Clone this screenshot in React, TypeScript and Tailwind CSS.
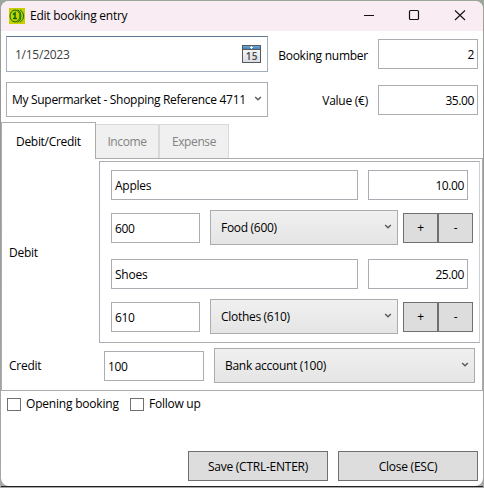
import type { ReactNode } from 'react';

function Chevron() {
  return (
    <svg className="mb-px shrink-0" width="8" height="6" viewBox="0 0 8 6" fill="none">
      <path d="M1.2 1L4 3.8L6.8 1" stroke="#5c5c5c" strokeWidth="1.5" />
    </svg>
  );
}

function Field({ className = '', children }: { className?: string; children: ReactNode }) {
  return (
    <div className={`flex h-[30px] shrink-0 items-center border border-[#abadb3] bg-white px-[3px] pt-[2px] ${className}`}>
      {children}
    </div>
  );
}

function NumberField({ className = '', children }: { className?: string; children: ReactNode }) {
  return <Field className={`justify-end tracking-[-0.4px] ${className}`}>{children}</Field>;
}

function Combo({ className = '', children }: { className?: string; children: ReactNode }) {
  return (
    <div
      className={`flex h-[35px] shrink-0 items-center justify-between border border-[#acacac] bg-linear-to-b from-[#f0f0f0] to-[#e5e5e5] pr-[5px] pl-[10px] tracking-[-0.3px] ${className}`}
    >
      <span className="pt-px">{children}</span>
      <Chevron />
    </div>
  );
}

function Button({ className = '', children }: { className?: string; children: ReactNode }) {
  return (
    <div className={`flex h-[30px] shrink-0 items-center justify-center border border-[#707070] bg-[#dddddd] pt-px ${className}`}>
      {children}
    </div>
  );
}

function Posting({ text, amount, code, account }: { text: string; amount: string; code: string; account: string }) {
  return (
    <div className="h-[89px] pl-[11px]">
      <div className="flex gap-[10px]">
        <Field className="w-[247px]">{text}</Field>
        <NumberField className="w-[100px]">{amount}</NumberField>
      </div>
      <div className="mt-[10px] flex items-center">
        <Field className="w-[89px] tracking-[-0.4px]">{code}</Field>
        <Combo className="ml-[10px] w-[188px]">{account}</Combo>
        <Button className="ml-[5px] w-[35px]">+</Button>
        <Button className="w-[35px]">-</Button>
      </div>
    </div>
  );
}

function AppIcon() {
  return (
    <svg width="16" height="16" viewBox="0 0 16 16" fill="none" stroke="#087008">
      <rect width="16" height="16" fill="#c8cf00" stroke="none" />
      <ellipse cx="6" cy="8" rx="5" ry="5.9" strokeWidth="1" />
      <path d="M4 6.5L6 5V10.5M4 10.5H8" strokeWidth="1.6" />
      <path d="M8.5 1.7Q12 3 12 8T8.5 14.3M11 1.7Q14.7 4 14.7 8T11 14.3" />
    </svg>
  );
}

function CalendarIcon() {
  return (
    <svg width="19" height="18" viewBox="0 0 19 18">
      <defs>
        <linearGradient id="page" x2="0" y2="1">
          <stop stopColor="#fff" />
          <stop offset="1" stopColor="#d8dbe0" />
        </linearGradient>
        <linearGradient id="head" x2="0" y2="1">
          <stop stopColor="#6aa6d8" />
          <stop offset="1" stopColor="#3b7fbd" />
        </linearGradient>
      </defs>
      <rect x=".5" y=".5" width="18" height="17" fill="url(#page)" stroke="#56585c" />
      <rect x="1" y="1" width="17" height="3.5" fill="url(#head)" />
      <path d="M8 2.5H11M9.5 1V4" stroke="#fff" />
      <path d="M1 4.5H18" stroke="#56585c" />
      <text x="9.7" y="15" textAnchor="middle" fontSize="10" letterSpacing="0.3" fontWeight="600" fill="#45484d" fontFamily="Open Sans, sans-serif">15</text>
    </svg>
  );
}

export default function App() {
  return (
    <div className="h-[488px] w-[484px] overflow-hidden bg-linear-to-b from-[#9aa79b] via-[#969696] via-20% to-[#a8a8a8] px-px pt-px font-['Open_Sans',sans-serif] text-[12px] leading-[16px] tracking-[-0.25px] whitespace-nowrap text-black">
      <div className="h-[485px] overflow-hidden rounded-[8px] bg-white">
        <div className="flex h-[30px] items-center bg-[#f9edf3] pl-2">
          <AppIcon />
          <span className="ml-[5px]">Edit booking entry</span>
          <svg className="ml-auto" width="120" height="30" viewBox="0 0 120 30" fill="none" stroke="#111">
            <path d="M1 14.5H11" />
            <rect x="46.5" y="9.5" width="9" height="9" rx="1" strokeWidth="1.2" />
            <path d="M92 9.5L102 19M102 9.5L92 19" strokeWidth="1.1" />
          </svg>
        </div>

        <div className="flex h-[91px] pt-[5px] pl-[5px]">
          <div className="w-[262px]">
            <div className="flex h-9 items-center justify-between border border-[#a3aebc] border-t-[#5d7790] pr-[6px] pl-[8px] text-[#404040]">
              <span className="pt-[2px]">1/15/2023</span>
              <CalendarIcon />
            </div>
            <div className="mt-[10px] flex h-[35px] items-center justify-between border border-[#abadb3] pr-[5px] pl-[5px] tracking-[-0.3px]">
              <span className="pt-px">My Supermarket - Shopping Reference 4711</span>
              <Chevron />
            </div>
          </div>
          <div className="ml-auto flex flex-col gap-4 pt-[3px] pr-[5px]">
            <div className="flex items-center justify-end gap-[10px]">
              <span className="pt-[3px]">Booking number</span>
              <NumberField className="w-[100px]">2</NumberField>
            </div>
            <div className="flex items-center justify-end gap-[10px]">
              <span className="pt-px">Value (€)</span>
              <NumberField className="w-[100px]">35.00</NumberField>
            </div>
          </div>
        </div>

        <div className="flex h-[37px]">
          <div className="w-[95px] border border-b-0 border-[#acacac] pt-[11px] pl-[14px] tracking-[-0.3px]">Debit/Credit</div>
          <div className="flex flex-1 border-b border-[#acacac] pt-[2px] tracking-[-0.4px] text-[#838383]">
            <div className="flex w-[63px] items-center justify-center border-t border-r border-[#d9d9d9] bg-[#f0f0f0] pt-px">Income</div>
            <div className="flex w-[70px] items-center justify-center border-t border-r border-l border-[#d9d9d9] bg-[#f0f0f0] pt-px">Expense</div>
          </div>
        </div>

        <div className="h-[232px] border border-t-0 border-[#acacac] pt-[2px]">
          <div className="flex items-center">
            <div className="w-[97px] pt-[2px] pl-[7px]">Debit</div>
            <div className="h-[182px] w-[381px] border border-[#abadb3] border-r-[#cccfd5] pt-[8px]">
              <Posting text="Apples" amount="10.00" code="600" account="Food (600)" />
              <Posting text="Shoes" amount="25.00" code="610" account="Clothes (610)" />
            </div>
          </div>
          <div className="mt-[5px] flex items-center">
            <div className="w-[102px] pt-px pl-[7px]">Credit</div>
            <Field className="w-[100px] tracking-[-0.4px]">100</Field>
            <Combo className="ml-[10px] w-[261px]">Bank account (100)</Combo>
          </div>
        </div>

        <div className="mt-[5px] flex h-4 items-center pl-[6px]">
          <span className="h-[13px] w-[14px] border border-[#707070]" />
          <span className="ml-[5px] w-[104px] tracking-[-0.2px]">Opening booking</span>
          <span className="h-[13px] w-[14px] border border-[#707070]" />
          <span className="ml-[5px]">Follow up</span>
        </div>

        <div className="mt-[39px] flex justify-end gap-[10px] pr-[5px]">
          <Button className="w-[140px]">Save (CTRL-ENTER)</Button>
          <Button className="w-[140px]">Close (ESC)</Button>
        </div>
      </div>
      <div className="h-px bg-[#222]" />
    </div>
  );
}
